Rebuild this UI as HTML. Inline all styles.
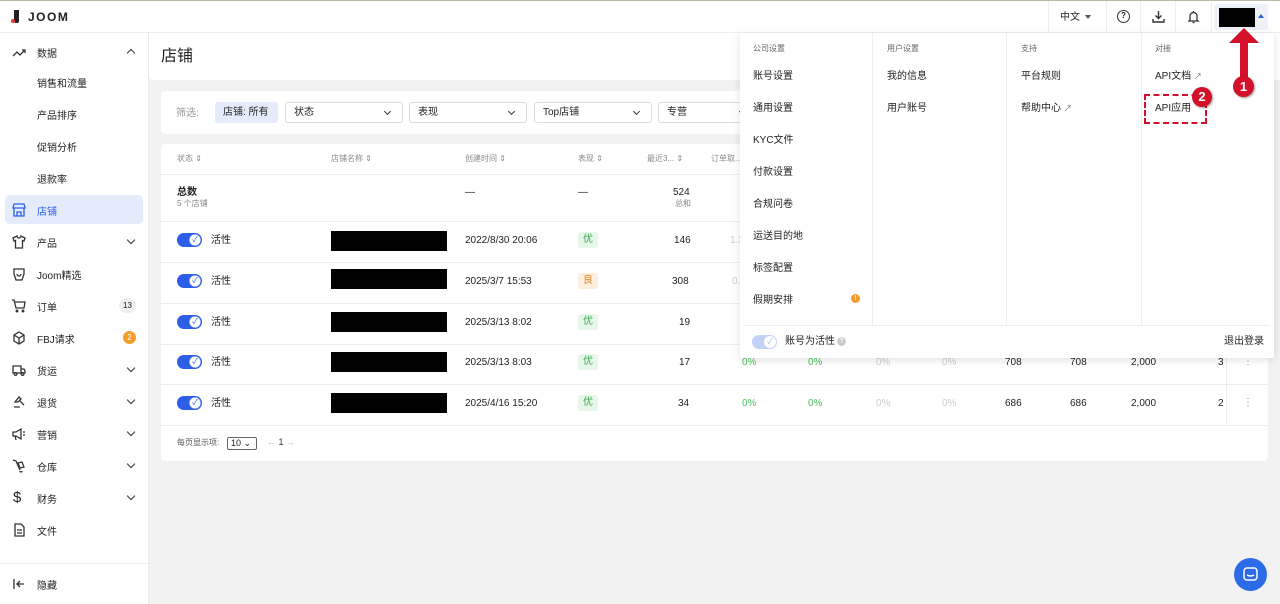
<!DOCTYPE html>
<html><head><meta charset="utf-8"><style>
*{box-sizing:border-box;margin:0;padding:0}
body{width:1280px;height:604px;overflow:hidden;background:#f2f2f3;font-family:"Liberation Sans","Noto Sans CJK SC",sans-serif;font-size:10px;line-height:1.55;color:#222;position:relative}
.abs{position:absolute}
.top{left:0;top:0;width:1280px;height:33px;background:#fff;border-top:1px solid #b9b9a8;border-bottom:1px solid #eceef0}
.side{left:0;top:33px;width:149px;height:571px;background:#fff;border-right:1px solid #ebebeb}
.nav{position:absolute;left:0;width:149px;height:30px;display:flex;align-items:center;font-size:10px;color:#222;line-height:normal}
.nav .ic{position:absolute;left:12px;top:8px;width:14px;height:14px}
.nav .t{position:absolute;left:37px}
.nav .ch{position:absolute;left:128px;top:10px;width:6px;height:6px;border-right:1.3px solid #333;border-bottom:1.3px solid #333;transform:rotate(45deg)}
.nav .cu{transform:rotate(225deg);top:13px}
.card{background:#fff;border-radius:4px}
.sel{position:absolute;top:102px;height:21px;border:1px solid #dcdcdc;border-radius:3px;background:#fff;font-size:10px;line-height:19px;padding-left:8px}
.sel:after{content:"";position:absolute;right:12px;top:6px;width:4px;height:4px;border-right:1.2px solid #333;border-bottom:1.2px solid #333;transform:rotate(45deg)}
.row{position:absolute;left:161px;width:1107px;border-top:1px solid #ececec}
.tg{position:absolute;left:177px;width:25px;height:14px;border-radius:7px;background:#2c5ee8}
.tg:after{content:"✓";position:absolute;right:1px;top:1px;width:12px;height:12px;border-radius:6px;background:#fff;color:#2c5ee8;font-size:8px;line-height:12px;text-align:center;box-shadow:0 0 0 .5px #2c5ee8 inset}
.blk{position:absolute;left:331px;width:116px;height:20px;background:#000}
.txt{position:absolute;font-size:10px}
.bd{position:absolute;left:578px;width:20px;height:16px;border-radius:3px;font-size:10px;line-height:16px;text-align:center}
.g{color:#4cbf5f}.lg{color:#ccc}
.menu{left:740px;top:33px;width:534px;height:325px;background:#fff;box-shadow:0 2px 8px rgba(0,0,0,.12)}
.mi{position:absolute;font-size:10px;color:#222}
.mh{position:absolute;font-size:8px;color:#666;top:10px}
.vl{position:absolute;top:0;width:1px;height:292px;background:#eee}
.hb{position:absolute;color:#8a8a8a;font-size:8px}
</style></head><body>
<div class="abs top">
 <div class="abs" style="left:14px;top:9px;width:5px;height:13px;background:#222;border-radius:0 0 2px 2px"></div>
 <div class="abs" style="left:11px;top:18px;width:4px;height:4px;background:#e53935;border-radius:50%"></div>
 <div class="abs" style="left:28px;top:9px;font-size:12px;letter-spacing:1.5px;font-weight:bold;color:#222;line-height:normal">JOOM</div>
 <div class="abs" style="left:1048px;top:0;width:1px;height:32px;background:#eee"></div>
 <div class="abs" style="left:1060px;top:9px;font-size:10px">中文</div>
 <div class="abs" style="left:1085px;top:14px;border:3px solid transparent;border-top:4px solid #555"></div>
 <div class="abs" style="left:1106px;top:0;width:1px;height:32px;background:#eee"></div>
 <div class="abs" style="left:1117px;top:9px;width:13px;height:13px;border:1.4px solid #333;border-radius:50%;font-size:8px;line-height:10px;text-align:center;font-weight:bold">?</div>
 <div class="abs" style="left:1140px;top:0;width:1px;height:32px;background:#eee"></div>
 <svg class="abs" style="left:1152px;top:9px" width="13" height="13" viewBox="0 0 13 13" fill="none" stroke="#333" stroke-width="1.4"><path d="M6.5 1v7M3.5 5.5l3 3 3-3M1 9v3h11V9"/></svg>
 <div class="abs" style="left:1175px;top:0;width:1px;height:32px;background:#eee"></div>
 <svg class="abs" style="left:1187px;top:9px" width="13" height="14" viewBox="0 0 13 14" fill="none" stroke="#333" stroke-width="1.3"><path d="M3 10V6a3.5 3.5 0 017 0v4l1 1H2zM5.5 12.5h2M6.5 1v1"/></svg>
 <div class="abs" style="left:1211px;top:1px;width:1px;height:31px;background:#eee"></div>
 <div class="abs" style="left:1214px;top:3px;width:54px;height:26px;background:#eef1f8;border-radius:3px"></div>
 <div class="abs" style="left:1219px;top:7px;width:36px;height:19px;background:#000"></div>
 <div class="abs" style="left:1258px;top:13px;border:3px solid transparent;border-bottom:4px solid #2c5ee8;border-top:0"></div>
</div>
<div class="abs side">
 <div class="nav" style="top:4px"><svg class="ic" viewBox="0 0 14 14" fill="none" stroke="#333" stroke-width="1.3"><path d="M1 11l4-4 3 3 5-5M10 5h3v3"/></svg><span class="t">数据</span><i class="ch cu"></i></div>
 <div class="nav" style="top:34px"><span class="t">销售和流量</span></div>
 <div class="nav" style="top:66px"><span class="t">产品排序</span></div>
 <div class="nav" style="top:98px"><span class="t">促销分析</span></div>
 <div class="nav" style="top:130px"><span class="t">退款率</span></div>
 <div class="abs" style="left:5px;top:162px;width:138px;height:29px;background:#e4ebfb;border-radius:5px"></div>
 <div class="nav" style="top:162px;color:#2c5ee8"><svg class="ic" viewBox="0 0 14 14" fill="none" stroke="#2c5ee8" stroke-width="1.3"><path d="M2 1h10l1 4H1zM2 5v8h10V5M5 13V9h4v4"/></svg><span class="t">店铺</span></div>
 <div class="nav" style="top:194px"><svg class="ic" viewBox="0 0 14 14" fill="none" stroke="#333" stroke-width="1.3"><path d="M5 1L1 3l1 3 1.5-.5V13h7V5.5L12 6l1-3-4-2a2 2 0 01-4 0z"/></svg><span class="t">产品</span><i class="ch"></i></div>
 <div class="nav" style="top:226px"><svg class="ic" viewBox="0 0 14 14" fill="none" stroke="#333" stroke-width="1.3"><path d="M2 2h10v5l-2 6H4L2 7zM5 7a2 2 0 104 0"/></svg><span class="t">Joom精选</span></div>
 <div class="nav" style="top:258px"><svg class="ic" viewBox="0 0 14 14" fill="none" stroke="#333" stroke-width="1.3"><path d="M0 1h2l2 8h8l1-6H3"/><circle cx="5" cy="12" r=".8"/><circle cx="11" cy="12" r=".8"/></svg><span class="t">订单</span><span class="abs" style="left:119px;top:7px;width:17px;height:15px;border-radius:8px;background:#eee;font-size:8px;line-height:15px;text-align:center">13</span></div>
 <div class="nav" style="top:290px"><svg class="ic" viewBox="0 0 14 14" fill="none" stroke="#333" stroke-width="1.3"><path d="M7 1l5 3v6l-5 3-5-3V4zM2 4l5 3 5-3M7 7v6"/></svg><span class="t">FBJ请求</span><span class="abs" style="left:123px;top:8px;width:13px;height:13px;border-radius:7px;background:#f39c2a;color:#fff;font-size:8px;line-height:13px;text-align:center">2</span></div>
 <div class="nav" style="top:322px"><svg class="ic" viewBox="0 0 14 14" fill="none" stroke="#333" stroke-width="1.3"><path d="M1 3h8v7H1zM9 6h3l1 2v2H9"/><circle cx="3.5" cy="11" r="1.3"/><circle cx="10.5" cy="11" r="1.3"/></svg><span class="t">货运</span><i class="ch"></i></div>
 <div class="nav" style="top:354px"><svg class="ic" viewBox="0 0 14 14" fill="none" stroke="#333" stroke-width="1.3"><path d="M3 7l4-5 2 2-3 3zM8 6l4 4M2 12h6"/></svg><span class="t">退货</span><i class="ch"></i></div>
 <div class="nav" style="top:386px"><svg class="ic" viewBox="0 0 14 14" fill="none" stroke="#333" stroke-width="1.3"><path d="M1 5h3l5-3v10L4 9H1zM3 9l1 4M11 5h2M11 8h2"/></svg><span class="t">营销</span><i class="ch"></i></div>
 <div class="nav" style="top:418px"><svg class="ic" viewBox="0 0 14 14" fill="none" stroke="#333" stroke-width="1.3"><path d="M1 1l3 1 4 9M6 4l4-1 2 5-4 1zM8 12a1 1 0 102 0"/></svg><span class="t">仓库</span><i class="ch"></i></div>
 <div class="nav" style="top:450px"><span class="ic" style="font-size:15px;line-height:14px;left:13px">$</span><span class="t">财务</span><i class="ch"></i></div>
 <div class="nav" style="top:482px"><svg class="ic" viewBox="0 0 14 14" fill="none" stroke="#333" stroke-width="1.3"><path d="M3 1h6l3 3v9H3zM5 7h5M5 10h5"/></svg><span class="t">文件</span></div>
 <div class="abs" style="left:0;top:530px;width:149px;height:1px;background:#eee"></div>
 <div class="nav" style="top:536px"><svg class="ic" viewBox="0 0 14 14" fill="none" stroke="#333" stroke-width="1.3"><path d="M2 2v10M12 7H5M8 4L5 7l3 3"/></svg><span class="t">隐藏</span></div>
</div>
<div class="abs card" style="left:149px;top:33px;width:1131px;height:47px;border-radius:0 0 0 4px"></div>
<div class="abs" style="left:161px;top:45px;font-size:16px">店铺</div>
<div class="abs card" style="left:161px;top:91px;width:1107px;height:43px"></div>
<div class="abs" style="left:176px;top:106px;color:#999">筛选:</div>
<div class="abs" style="left:215px;top:102px;width:63px;height:21px;background:#e4ebfb;border-radius:3px;line-height:21px;padding-left:8px">店铺: 所有</div>
<div class="sel" style="left:285px;width:118px">状态</div>
<div class="sel" style="left:409px;width:118px">表现</div>
<div class="sel" style="left:534px;width:118px">Top店铺</div>
<div class="sel" style="left:658px;width:100px">专营</div>
<div class="abs card" style="left:161px;top:144px;width:1107px;height:317px"></div>
<div class="hb" style="left:177px;top:153px">状态 ⇕</div>
<div class="hb" style="left:331px;top:153px">店铺名称 ⇕</div>
<div class="hb" style="left:465px;top:153px">创建时间 ⇕</div>
<div class="hb" style="left:578px;top:153px">表现 ⇕</div>
<div class="hb" style="left:647px;top:153px">最近3... ⇕</div>
<div class="hb" style="left:711px;top:153px">订单取...</div>
<div class="row" style="top:174px"></div>
<div class="txt" style="left:177px;top:185px;font-weight:bold">总数</div>
<div class="txt" style="left:177px;top:198px;font-size:8px;color:#888">5 个店铺</div>
<div class="txt" style="left:465px;top:185px">—</div><div class="txt" style="left:578px;top:185px">—</div>
<div class="txt" style="left:673px;top:185px">524</div>
<div class="txt" style="left:675px;top:198px;font-size:8px;color:#888">总和</div>
<div class="row" style="top:221px"></div><div class="row" style="top:262px"></div><div class="row" style="top:303px"></div><div class="row" style="top:344px"></div><div class="row" style="top:384px"></div><div class="row" style="top:425px"></div>
<div class="abs" style="left:1226px;top:344px;width:1px;height:81px;background:#ececec"></div>

<div class="tg" style="top:233px"></div><div class="txt" style="left:211px;top:233px">活性</div><div class="blk" style="top:231px"></div><div class="txt" style="left:465px;top:233px">2022/8/30 20:06</div><div class="bd" style="top:232px;background:#e6f6e8;color:#3aaa4e">优</div><div class="txt" style="left:674px;top:233px">146</div><div class="txt lg" style="left:730px;top:233px">1.3</div>
<div class="tg" style="top:274px"></div><div class="txt" style="left:211px;top:274px">活性</div><div class="blk" style="top:269px"></div><div class="txt" style="left:465px;top:274px">2025/3/7 15:53</div><div class="bd" style="top:273px;background:#fdeedd;color:#e38a28">良</div><div class="txt" style="left:672px;top:274px">308</div><div class="txt lg" style="left:732px;top:274px">0.</div>
<div class="tg" style="top:315px"></div><div class="txt" style="left:211px;top:315px">活性</div><div class="blk" style="top:312px"></div><div class="txt" style="left:465px;top:315px">2025/3/13 8:02</div><div class="bd" style="top:314px;background:#e6f6e8;color:#3aaa4e">优</div><div class="txt" style="left:679px;top:315px">19</div>
<div class="tg" style="top:355px"></div><div class="txt" style="left:211px;top:355px">活性</div><div class="blk" style="top:352px"></div><div class="txt" style="left:465px;top:355px">2025/3/13 8:03</div><div class="bd" style="top:354px;background:#e6f6e8;color:#3aaa4e">优</div><div class="txt" style="left:679px;top:355px">17</div>
<div class="txt g" style="left:742px;top:355px">0%</div><div class="txt g" style="left:808px;top:355px">0%</div><div class="txt lg" style="left:876px;top:355px">0%</div><div class="txt lg" style="left:942px;top:355px">0%</div><div class="txt" style="left:1005px;top:355px">708</div><div class="txt" style="left:1070px;top:355px">708</div><div class="txt" style="left:1131px;top:355px">2,000</div><div class="txt" style="left:1218px;top:355px">3</div><div class="txt" style="left:1243px;top:354px;color:#888">⋮</div>
<div class="tg" style="top:396px"></div><div class="txt" style="left:211px;top:396px">活性</div><div class="blk" style="top:393px"></div><div class="txt" style="left:465px;top:396px">2025/4/16 15:20</div><div class="bd" style="top:395px;background:#e6f6e8;color:#3aaa4e">优</div><div class="txt" style="left:678px;top:396px">34</div>
<div class="txt g" style="left:742px;top:396px">0%</div><div class="txt g" style="left:808px;top:396px">0%</div><div class="txt lg" style="left:876px;top:396px">0%</div><div class="txt lg" style="left:942px;top:396px">0%</div><div class="txt" style="left:1005px;top:396px">686</div><div class="txt" style="left:1070px;top:396px">686</div><div class="txt" style="left:1131px;top:396px">2,000</div><div class="txt" style="left:1218px;top:396px">2</div><div class="txt" style="left:1243px;top:395px;color:#888">⋮</div>
<div class="txt" style="left:177px;top:437px;font-size:8px;color:#555">每页显示项:</div>
<div class="abs" style="left:227px;top:437px;width:30px;height:13px;border:1px solid #666;border-radius:2px;font-size:9px;line-height:11px;padding-left:3px">10 ⌄</div>
<div class="txt" style="left:267px;top:436px;font-size:9px;color:#bbb">← <span style="color:#333">1</span> →</div>

<div class="abs menu">
 <div class="vl" style="left:132px"></div><div class="vl" style="left:266px"></div><div class="vl" style="left:401px"></div>
 <div class="abs" style="left:4px;top:292px;width:526px;height:1px;background:#eee"></div>
 <div class="mh" style="left:13px">公司设置</div><div class="mh" style="left:147px">用户设置</div><div class="mh" style="left:281px">支持</div><div class="mh" style="left:415px">对接</div>
 <div class="mi" style="left:13px;top:36px">账号设置</div><div class="mi" style="left:13px;top:68px">通用设置</div><div class="mi" style="left:13px;top:100px">KYC文件</div><div class="mi" style="left:13px;top:132px">付款设置</div><div class="mi" style="left:13px;top:164px">合规问卷</div><div class="mi" style="left:13px;top:196px">运送目的地</div><div class="mi" style="left:13px;top:228px">标签配置</div><div class="mi" style="left:13px;top:260px">假期安排</div>
 <div class="abs" style="left:111px;top:261px;width:9px;height:9px;border-radius:5px;background:#f39c2a;color:#fff;font-size:7px;line-height:9px;text-align:center">!</div>
 <div class="mi" style="left:147px;top:36px">我的信息</div><div class="mi" style="left:147px;top:68px">用户账号</div>
 <div class="mi" style="left:281px;top:36px">平台规则</div><div class="mi" style="left:281px;top:68px">帮助中心 <span style="font-size:8px;color:#666">↗</span></div>
 <div class="mi" style="left:415px;top:36px">API文档 <span style="font-size:8px;color:#666">↗</span></div><div class="mi" style="left:415px;top:68px">API应用</div>
 <div class="abs" style="left:12px;top:302px;width:25px;height:14px;border-radius:7px;background:#c2d2f6"></div>
 <div class="abs" style="left:24px;top:303px;width:12px;height:12px;border-radius:6px;background:#fff;color:#9fb6ee;font-size:8px;line-height:12px;text-align:center">✓</div>
 <div class="mi" style="left:45px;top:301px">账号为活性</div>
 <div class="abs" style="left:97px;top:304px;width:9px;height:9px;border-radius:5px;background:#ccc;color:#fff;font-size:7px;line-height:9px;text-align:center">?</div>
 <div class="mi" style="left:484px;top:301px">退出登录</div>
</div>
<div class="abs" style="left:1144px;top:94px;width:63px;height:30px;border:2px dashed #d4102a"></div>
<div class="abs" style="left:1192px;top:87px;width:20px;height:20px;border-radius:50%;background:#d4102a;color:#fff;font-weight:bold;font-size:13px;line-height:20px;text-align:center;box-shadow:1px 1px 2px rgba(0,0,0,.4)">2</div>
<svg class="abs" style="left:1228px;top:28px" width="32" height="50" viewBox="0 0 32 50"><path d="M16 0L31 15H20V50H12V15H1z" fill="#d4102a"/></svg>
<div class="abs" style="left:1233px;top:76px;width:21px;height:21px;border-radius:50%;background:#d4102a;color:#fff;font-weight:bold;font-size:13px;line-height:21px;text-align:center;box-shadow:1px 1px 2px rgba(0,0,0,.4)">1</div>
<div class="abs" style="left:1234px;top:558px;width:33px;height:33px;border-radius:50%;background:#2c6be8"></div>
<svg class="abs" style="left:1243px;top:567px" width="15" height="15" viewBox="0 0 15 15" fill="none" stroke="#fff" stroke-width="1.5"><rect x="1" y="1" width="13" height="12" rx="3"/><path d="M4 8q3.5 2 7 0"/></svg>
</body></html>
